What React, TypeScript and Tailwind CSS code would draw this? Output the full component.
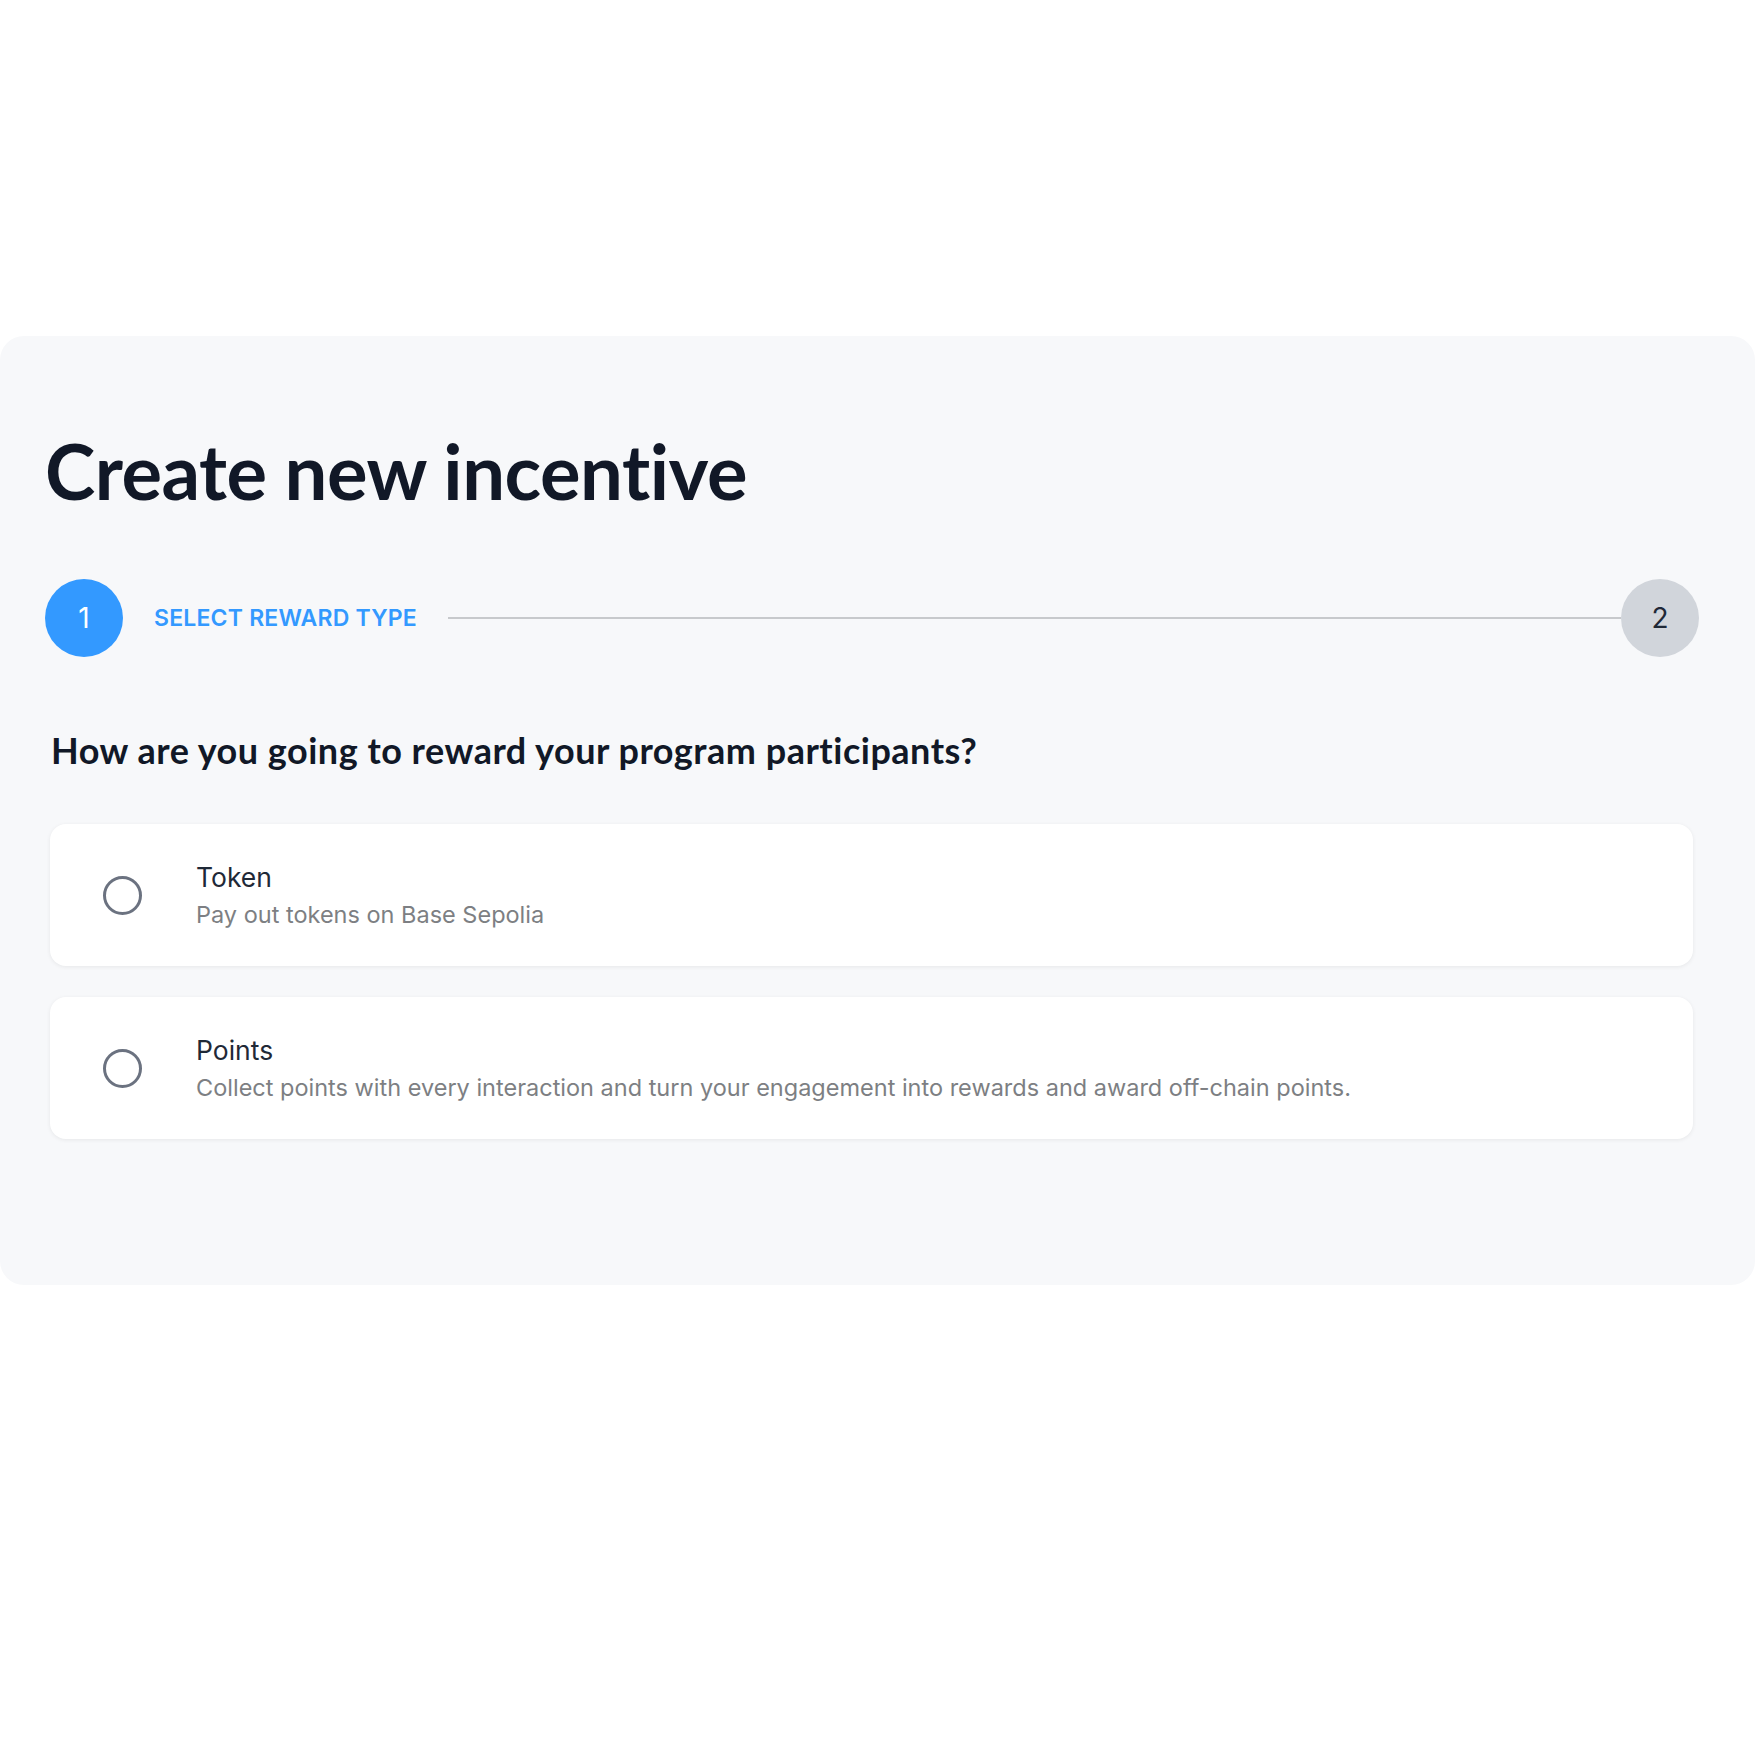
import React from 'react';

const options = [
  { title: 'Token', desc: 'Pay out tokens on Base Sepolia' },
  {
    title: 'Points',
    desc: 'Collect points with every interaction and turn your engagement into rewards and award off-chain points.',
  },
];

const RadioOption = ({ title, desc }: { title: string; desc: string }) => (
  <label className="flex items-center h-[142px] bg-white rounded-2xl shadow-[0_1px_4px_rgba(0,0,0,0.07)] pl-[53px] cursor-pointer">
    <span className="w-[39px] h-[39px] rounded-full border-[3px] border-[#6b7280] shrink-0" />
    <div className="ml-[54px] flex flex-col font-['Inter',sans-serif]">
      <span className="text-[26.5px] leading-[36px] text-[#1f2937]">{title}</span>
      <span className="text-[23.5px] leading-[34px] text-[#7d7f83] mt-[3px]">{desc}</span>
    </div>
  </label>
);

export default function App() {
  return (
    <div className="w-full h-[1755px] bg-white pt-[336px]">
      <div className="h-[949px] bg-[#f7f8fa] rounded-3xl pl-[45px] pr-[56px] pt-[97px]">
        <h1 className="font-['Lato',sans-serif] font-bold text-[76px] leading-[76px] tracking-[-0.5px] text-[#111827]">
          Create new incentive
        </h1>

        {/* stepper */}
        <div className="flex items-center mt-[70px] h-[78px]">
          <div className="w-[78px] h-[78px] rounded-full bg-[#3399ff] flex items-center justify-center text-white font-['Inter',sans-serif] text-[28px]">
            1
          </div>
          <span className="ml-[31px] font-['Inter',sans-serif] font-semibold text-[23px] text-[#3399ff] tracking-[0.2px]">
            SELECT REWARD TYPE
          </span>
          <div className="flex-1 h-[2px] bg-[#c7c9cc] ml-[31px]" />
          <div className="w-[78px] h-[78px] rounded-full bg-[#d1d5db] flex items-center justify-center text-[#1f2937] font-['Inter',sans-serif] text-[28px]">
            2
          </div>
        </div>

        <h2 className="mt-[71px] ml-[6px] font-['Lato',sans-serif] font-bold text-[36px] leading-[44px] tracking-[0.5px] text-[#111827]">
          How are you going to reward your program participants?
        </h2>

        <div className="mt-[52px] ml-[5px] mr-[6px] flex flex-col gap-[31px]">
          {options.map((o) => (
            <RadioOption key={o.title} title={o.title} desc={o.desc} />
          ))}
        </div>
      </div>
    </div>
  );
}
